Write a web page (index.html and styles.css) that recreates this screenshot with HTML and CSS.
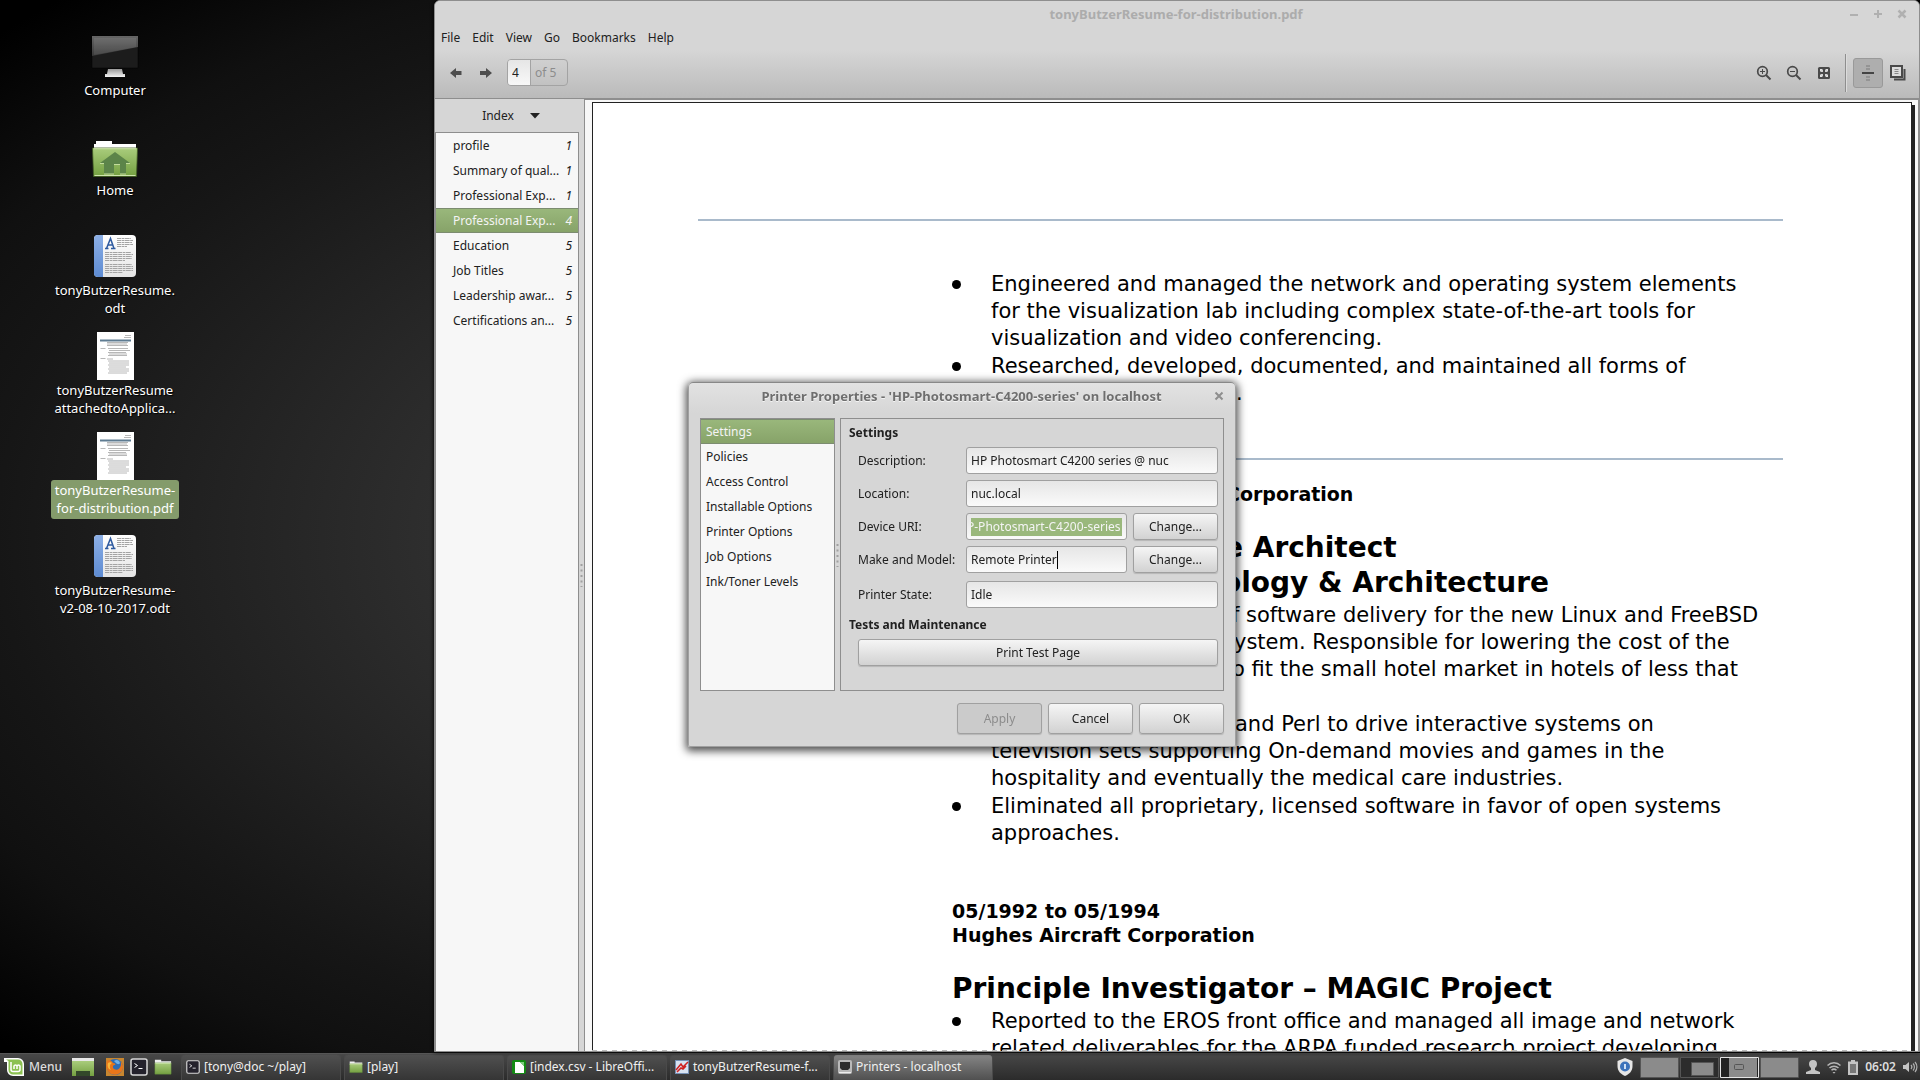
FILE: index.html
```html
<!DOCTYPE html>
<html lang="en">
<head>
<meta charset="utf-8">
<title>Desktop</title>
<link rel="stylesheet" href="styles.css">
</head>
<body>
<svg class="defs" aria-hidden="true">
  <defs>
    <linearGradient id="g-screen" x1="0" y1="0" x2="0" y2="1"><stop offset="0" stop-color="#666"/><stop offset="1" stop-color="#383838"/></linearGradient>
    <linearGradient id="g-folder" x1="0" y1="0" x2="0" y2="1"><stop offset="0" stop-color="#a9cc7c"/><stop offset="1" stop-color="#74a041"/></linearGradient>
    <linearGradient id="g-spine" x1="0" y1="0" x2="0" y2="1"><stop offset="0" stop-color="#8db0e6"/><stop offset="1" stop-color="#5d8bd2"/></linearGradient>
    <linearGradient id="g-paper" x1="0" y1="0" x2="0" y2="1"><stop offset="0" stop-color="#fff"/><stop offset="1" stop-color="#e4e4e4"/></linearGradient>
    <linearGradient id="g-stand" x1="0" y1="0" x2="0" y2="1"><stop offset="0" stop-color="#999"/><stop offset="1" stop-color="#f4f4f4"/></linearGradient>
  </defs>
  <symbol id="odt" viewBox="0 0 48 48">
    <rect x="3" y="3" width="42" height="42" rx="4" fill="url(#g-paper)"/>
    <path d="M7 3h5v42H7a4 4 0 0 1-4-4V7a4 4 0 0 1 4-4z" fill="url(#g-spine)"/>
    <path d="M14 16.500h3.500M20 16.500h4.500M15.500 16.500L19.500 6.500L23 16.500M16.500 13h5" fill="none" stroke="#2f5ba0" stroke-width="1.500"/>
    <path d="M26 6.500h14M26 8.500h16M26 10.500h15M26 12.500h16M26 14.500h10M14 20.500h26M14 22.500h28M14 24.500h27M14 26.500h27M14 28.500h20M14 32.500h27M14 34.500h28M14 36.500h28M14 38.500h28M14 40.500h18" stroke="#a4a4a4" stroke-width="1" stroke-dasharray="4 .6 2.500 .5 5 .6"/>
  </symbol>
  <symbol id="thumb" viewBox="0 0 37 48">
    <path d="M0 0h37v48H0z" fill="#fff"/>
    <path d="M3 7.500h31v2H3z" fill="#5f7c92"/>
    <path d="M28 3.500h6M27 5.500h7M10 10.500h21M10 12h20M10 13.500h21M3.500 16.500h5M11 16.500h20M12 18.500h21M11 20.500h18M12 22h18M11 23.500h19M3.500 26.500h5M10 27h6M11 29h21M12 31h20M11 33h21M12 35h17M11 37h21M12 39h20M11 41h19" stroke="#b8b8b8" stroke-width="1"/>
  </symbol>
  <symbol id="folder" viewBox="0 0 20 18">
    <path d="M1 1h7v1.500h11V6H1z" fill="#eee"/><path d="M1 4.500h18V17H1z" fill="url(#g-folder)" stroke="#5f8a3a" stroke-width=".5"/><path d="M1.500 5h17" stroke="#cbe3a9"/>
  </symbol>
  <symbol id="term" viewBox="0 0 18 18">
    <rect x="1" y="1" width="16" height="16" rx="2" fill="#24222c" stroke="#d8d8d8" stroke-width="1.500"/>
    <path d="M4.500 5.500l3 2-3 2M8.500 10.500h4" fill="none" stroke="#fff"/>
  </symbol>
</svg>

<main class="desktop">
  <nav class="icons">
    <a class="icon" href="#computer">
      <svg width="48" height="48" viewBox="0 0 48 48"><path d="M1 4h46v32H1z" fill="#1c1c1c" stroke="#000" stroke-width=".5"/><path d="M1 4h46v11L1 24z" fill="url(#g-screen)"/><path d="M3 6h42v9L3 23z" fill="#fff" opacity=".08"/><path d="M17 37h14l1 5h2v3H14v-3h2z" fill="url(#g-stand)"/></svg>
      <span class="name">Computer</span></a>
    <a class="icon" href="#home">
      <svg width="48" height="48" viewBox="0 0 48 48"><path d="M5 9h16v3h24v5H3v-5h2z" fill="#fff"/><path d="M1.500 16h45l-1 28.500h-43z" fill="url(#g-folder)" stroke="#3f5a22" stroke-width=".8"/><path d="M2.500 16.700h43M3.500 43.500h41" stroke="#cfe5ae"/><path d="M24 20l15 11h-4v11h-6v-9h-6v9H13V31H9z" fill="#5c8449"/><path d="M9 31.500h4M35 31.500h4M23 32.500h6M13 42h10M29 42h6" stroke="#c3dc9c"/></svg>
      <span class="name">Home</span></a>
    <a class="icon" href="#odt"><svg width="48" height="48"><use href="#odt"/></svg><span class="name">tonyButzerResume.<br>odt</span></a>
    <a class="icon" href="#app"><svg width="37" height="48"><use href="#thumb"/></svg><span class="name">tonyButzerResume<br>attachedtoApplica...</span></a>
    <a class="icon selected" href="#pdf"><svg width="37" height="48"><use href="#thumb"/></svg><span class="name">tonyButzerResume-<br>for-distribution.pdf</span></a>
    <a class="icon" href="#v2"><svg width="48" height="48"><use href="#odt"/></svg><span class="name">tonyButzerResume-<br>v2-08-10-2017.odt</span></a>
  </nav>

  <section class="viewer">
    <header class="chrome">
      <div class="titlebar">
        <h1>tonyButzerResume-for-distribution.pdf</h1>
        <div class="wm">
          <button aria-label="Minimize"><svg width="10" height="10"><path d="M1 6h8" stroke="#b0b0b0" stroke-width="2"/></svg></button>
          <button aria-label="Maximize"><svg width="10" height="10"><path d="M1 5h8M5 1v8" stroke="#b0b0b0" stroke-width="2"/></svg></button>
          <button aria-label="Close"><svg width="10" height="10"><path d="M1.500 1.500l7 7M8.500 1.500l-7 7" stroke="#b0b0b0" stroke-width="2.500"/></svg></button>
        </div>
      </div>
      <nav class="menubar"><a href="#file">File</a><a href="#edit">Edit</a><a href="#view">View</a><a href="#go">Go</a><a href="#bookmarks">Bookmarks</a><a href="#help">Help</a></nav>
      <div class="toolbar">
        <button class="tool" aria-label="Previous page"><svg width="14" height="12"><path d="M1 6l6-5v3h5.500v4H7v3z" fill="#4e4e4e"/></svg></button>
        <button class="tool" aria-label="Next page"><svg width="14" height="12"><path d="M13 6L7 1v3H1v4h6v3z" fill="#4e4e4e"/></svg></button>
        <label class="pager"><input value="4" aria-label="Page"><span>of 5</span></label>
        <span class="grow"></span>
        <button class="tool" aria-label="Zoom in"><svg width="16" height="16"><circle cx="6.500" cy="6.500" r="4.800" fill="none" stroke="#4a4a4a" stroke-width="1.700"/><path d="M4 6.500h5M6.500 4v5" stroke="#4a4a4a"/><path d="M10 10l4.500 4.500" stroke="#4a4a4a" stroke-width="2"/></svg></button>
        <button class="tool" aria-label="Zoom out"><svg width="16" height="16"><circle cx="6.500" cy="6.500" r="4.800" fill="none" stroke="#4a4a4a" stroke-width="1.700"/><path d="M4 6.500h5" stroke="#4a4a4a"/><path d="M10 10l4.500 4.500" stroke="#4a4a4a" stroke-width="2"/></svg></button>
        <button class="tool" aria-label="Fit page"><svg width="16" height="16"><rect x="2" y="2" width="12" height="12" rx="1.500" fill="#4a4a4a"/><path d="M4 4h3L4 7zM12 4v3L9 4zM12 12H9l3-3zM4 12V9l3 3z" fill="#e2e2e2"/><path d="M5 5h2v2H5zM9 5h2v2H9zM5 9h2v2H5zM9 9h2v2H9z" fill="#d2d2d2"/></svg></button>
        <span class="sep"></span>
        <button class="tool toggle" aria-label="Continuous"><svg width="16" height="16"><path d="M2 8h12" stroke="#444" stroke-width="2"/><path d="M6 1h4M6 4h4M6 12h4M6 15h4" stroke="#8c8c8c" stroke-width="1.500"/></svg></button>
        <button class="tool" aria-label="Dual page"><svg width="16" height="16"><path d="M14.500 4v10.500H4" fill="none" stroke="#4a4a4a" stroke-width="2"/><rect x="1" y="1" width="11" height="11" fill="#ddd" stroke="#4a4a4a" stroke-width="2"/><path d="M4.500 4.500h4M4.500 6.500h4M4.500 8.500h4" stroke="#888"/></svg></button>
      </div>
    </header>
    <div class="body">
      <aside class="sidebar">
        <button class="side-head">Index <svg width="10" height="6"><path d="M0 0h10L5 5.500z" fill="#222"/></svg></button>
        <ol class="outline">
          <li><a href="#p1">profile</a><i>1</i></li>
          <li><a href="#p1">Summary of qual...</a><i>1</i></li>
          <li><a href="#p1">Professional Exp...</a><i>1</i></li>
          <li class="current"><a href="#p4">Professional Exp...</a><i>4</i></li>
          <li><a href="#p5">Education</a><i>5</i></li>
          <li><a href="#p5">Job Titles</a><i>5</i></li>
          <li><a href="#p5">Leadership awar...</a><i>5</i></li>
          <li><a href="#p5">Certifications an...</a><i>5</i></li>
        </ol>
      </aside>
      <div class="grip"><svg width="3" height="24"><path d="M1.500 1v23" stroke="#a0a0a0" stroke-width="2" stroke-dasharray="2 3.500"/></svg></div>
      <div class="canvas">
        <article class="page">
          <hr>
          <div class="text">
            <ul>
              <li><span>Engineered and managed the network and operating system elements<br>for the visualization lab including complex state-of-the-art tools for<br>visualization and video conferencing.</span></li>
              <li><span>Researched, developed, documented, and maintained all forms of<br><b class="lead lead-dot"></b>.</span></li>
            </ul>
          </div>
          <hr class="thin">
          <div class="text">
            <h3><b class="lead lead-employer"></b>Corporation</h3>
            <h2><b class="lead lead-role"></b>e Architect<br><b class="lead lead-unit"></b>ology &amp; Architecture</h2>
            <ul>
              <li class="plain"><span><b class="lead lead-a"></b>f software delivery for the new Linux and FreeBSD<br><b class="lead lead-b"></b>ystem. Responsible for lowering the cost of the<br><b class="lead lead-c"></b>o fit the small hotel market in hotels of less that<br><br></span></li>
              <li class="plain"><span><b class="lead lead-d"></b>and Perl to drive interactive systems on<br>television sets supporting On-demand movies and games in the<br>hospitality and eventually the medical care industries.</span></li>
              <li><span>Eliminated all proprietary, licensed software in favor of open systems<br>approaches.</span></li>
            </ul>
            <h3 class="next">05/1992 to 05/1994<br>Hughes Aircraft Corporation</h3>
            <h2>Principle Investigator – MAGIC Project</h2>
            <ul>
              <li><span>Reported to the EROS front office and managed all image and network<br>related deliverables for the ARPA funded research project developing</span></li>
            </ul>
          </div>
        </article>
      </div>
    </div>
  </section>

  <section class="dialog" role="dialog" aria-labelledby="dlg-title">
    <header class="dlg-title">
      <h2 id="dlg-title">Printer Properties - 'HP-Photosmart-C4200-series' on localhost</h2>
      <button aria-label="Close"><svg width="10" height="10"><path d="M1.500 1.500l7 7M8.500 1.500l-7 7" stroke="#8e8e8e" stroke-width="2"/></svg></button>
    </header>
    <div class="dlg-main">
      <ul class="tabs">
        <li class="current"><a href="#settings">Settings</a></li>
        <li><a href="#policies">Policies</a></li>
        <li><a href="#access">Access Control</a></li>
        <li><a href="#installable">Installable Options</a></li>
        <li><a href="#printer">Printer Options</a></li>
        <li><a href="#job">Job Options</a></li>
        <li><a href="#ink">Ink/Toner Levels</a></li>
      </ul>
      <div class="dlg-grip"><svg width="3" height="24"><path d="M1.500 1v23" stroke="#a0a0a0" stroke-width="2" stroke-dasharray="2 3.500"/></svg></div>
      <form class="panel">
        <h3>Settings</h3>
        <div class="rows">
          <div class="row"><label for="desc">Description:</label><input class="box" id="desc" value="HP Photosmart C4200 series @ nuc"></div>
          <div class="row"><label for="loc">Location:</label><input class="box" id="loc" value="nuc.local"></div>
          <div class="row"><label for="uri">Device URI:</label><div class="box"><input class="marked" id="uri" value="P-Photosmart-C4200-series"></div><button type="button" class="btn">Change...</button></div>
          <div class="row"><label for="make">Make and Model:</label><div class="box"><input class="sized" id="make" size="11" value="Remote Printer"><span class="caret"></span></div><button type="button" class="btn">Change...</button></div>
          <div class="row state"><label for="state">Printer State:</label><input class="box" id="state" value="Idle" readonly></div>
        </div>
        <h3 class="tests">Tests and Maintenance</h3>
        <button type="button" class="btn wide">Print Test Page</button>
      </form>
    </div>
    <footer class="dlg-foot">
      <button class="btn" disabled>Apply</button><button class="btn">Cancel</button><button class="btn">OK</button>
    </footer>
  </section>
</main>

<footer class="taskbar">
  <button class="menu"><svg width="20" height="20" viewBox="0 0 20 20"><path d="M0 1h14a6 6 0 0 1 6 6v12H9a6 6 0 0 1-6-6V5H0z" fill="#fff"/><path d="M2 2.500h12a4.500 4.500 0 0 1 4.500 4.500v10.500H9A4.500 4.500 0 0 1 4.500 13V4z" fill="#8cc152"/><path d="M7 5v7.500a2 2 0 0 0 2 2h5a2 2 0 0 0 2-2V9a1.600 1.600 0 0 0-3 0v3M13 9a1.600 1.600 0 0 0-3 0v3" fill="none" stroke="#fff" stroke-width="1.500"/></svg>Menu</button>
  <div class="launch">
    <button class="show" aria-label="Show desktop"><svg width="22" height="18"><path d="M0 0h22v3H0z" fill="#e8e8e8"/><path d="M0 3h22v15H0z" fill="url(#g-folder)"/><path d="M4 13h14v5H4z" fill="#33482a"/></svg></button>
    <button aria-label="Firefox"><svg width="18" height="18"><path d="M0 0h18v18H0z" fill="#c8862f"/><circle cx="9" cy="9" r="8" fill="#2e6db4"/><path d="M1 3c3-2 5 0 6 2 2 0 3 1 2 2-2 0-3 2-1 4 3 2 6 0 7-4 0-2 0-3-1-4 4 3 4 9 0 12-4 3-10 2-12-2C0 10 0 6 1 3z" fill="#e8751a"/><path d="M2 5c1-1 3-1 4 0-2 1-3 4-1 7-3-1-4-4-3-7z" fill="#f7b63c"/><path d="M8 3c3-2 5-1 6 2-1 2-3 1-4 0z" fill="#6fb1e8"/></svg></button>
    <button aria-label="Terminal"><svg width="18" height="18"><use href="#term"/></svg></button>
    <button aria-label="Files"><svg width="18" height="18"><use href="#folder"/></svg></button>
  </div>
  <div class="tasks">
    <button class="task"><svg width="14" height="14"><use href="#term"/></svg>[tony@doc ~/play]</button>
    <button class="task"><svg width="14" height="14"><use href="#folder"/></svg>[play]</button>
    <button class="task"><svg width="14" height="14"><rect width="14" height="14" rx="2" fill="#138a13"/><path d="M3 2h5l4 4v7H3z" fill="#fff"/><path d="M8 2h4v4z" fill="#7fd07f"/></svg>[index.csv - LibreOffi...</button>
    <button class="task"><svg width="14" height="14"><path d="M0 0h14v14H0z" fill="#7590b5"/><path d="M1 1h12v12H1z" fill="#d7e2f1"/><path d="M1 10l5-6 2 3 5-5M2 12l4-4 2 1 3-3" fill="none" stroke="#d02020" stroke-width="1.500"/></svg>tonyButzerResume-f...</button>
    <button class="task active"><svg width="14" height="14"><rect width="14" height="14" rx="2" fill="#b9b9b9"/><path d="M2 2h10v6l-2 2H4L2 8z" fill="#2d2d2d"/><path d="M1 12.500h12" stroke="#eee"/></svg>Printers - localhost</button>
  </div>
  <div class="tray">
    <svg width="16" height="18"><path d="M8 0l7.500 3v5c0 5-3 8-7.500 10C3.500 16 .5 13 .5 8V3z" fill="#e6e6e6"/><circle cx="8" cy="8.500" r="5" fill="#3d73bb"/><path d="M8 6v5" stroke="#cfe0f5" stroke-width="2"/></svg>
    <div class="spaces">
      <svg class="ws" width="39" height="21"><path d="M1 1h37v19H1z" fill="#8b8b8b"/><path d="M.5.500h38v20H.5z" fill="none" stroke="#555"/></svg>
      <svg class="ws" width="39" height="21"><path d="M1 1h37v19H1z" fill="#2c2c2c"/><path d="M11.500 5.500h22v13h-22z" fill="#8b8b8b" stroke="#555"/><path d="M.5.500h38v20H.5z" fill="none" stroke="#555"/></svg>
      <svg class="ws" width="39" height="21"><path d="M1 1h37v19H1z" fill="#222"/><path d="M9 1h28v19H9z" fill="#8b8b8b"/><rect x="14.500" y="7.500" width="9" height="5" rx="1" fill="none" stroke="#555"/><path d="M.5.500h38v20H.5z" fill="none" stroke="#e4e4e4"/></svg>
      <svg class="ws" width="39" height="21"><path d="M1 1h37v19H1z" fill="#8b8b8b"/><path d="M.5.500h38v20H.5z" fill="none" stroke="#555"/></svg>
    </div>
    <svg width="14" height="14"><path d="M7 0c2.500 0 4 1.500 4 4 0 2-1 3-2 4v2l5 2v2H0v-2l5-2V8C4 7 3 6 3 4c0-2.500 1.500-4 4-4z" fill="#c4c4c4"/></svg>
    <svg width="14" height="14" viewBox="1 0 14 14"><path d="M1.500 5.500a9 9 0 0 1 13 0M3.500 8a6.500 6.500 0 0 1 9 0M5.500 10.300a3.700 3.700 0 0 1 5 0" fill="none" stroke="#b5b5b5" stroke-width="1.500"/><path d="M6.500 12h3L8 13.800z" fill="#b5b5b5"/></svg>
    <svg width="10" height="15"><path d="M3 0h4v1.500h3V15H0V1.500h3z" fill="#c4c4c4"/><path d="M2 4h6v9H2z" fill="#777"/></svg>
    <time>06:02</time>
    <svg width="16" height="12"><path d="M0 4h2.500L6 1v10L2.500 8H0z" fill="#c4c4c4"/><path d="M8 4a3 3 0 0 1 0 4M10 2.500a5 5 0 0 1 0 7M12 1a7.500 7.500 0 0 1 0 10" fill="none" stroke="#b0b0b0" stroke-width="1.200"/></svg>
  </div>
</footer>
</body>
</html>
```
FILE: styles.css
```css
* { box-sizing: border-box; }
body {
  margin: 0;
  height: 100vh;
  display: flex;
  flex-direction: column;
  overflow: hidden;
  background: #000;
  font: 12px/18px "Noto Sans", sans-serif;
  color: #212121;
}
.defs { position: absolute; width: 0; height: 0; }
svg { display: block; flex: none; }
h1, h2, h3, ul, ol { margin: 0; padding: 0; font-size: inherit; list-style: none; }
a { color: inherit; text-decoration: none; }
button, input { font: inherit; color: inherit; margin: 0; padding: 0; border: 0; background: none; }
button { display: flex; align-items: center; justify-content: center; }
input { outline: 0; min-width: 0; }

.desktop {
  flex: 1;
  min-height: 0;
  position: relative;
  background: radial-gradient(ellipse farthest-corner at 50% 51%, #363636 0, #2e2e2e 39%, #161616 71%, #101010 81%, #000 97%);
}

/* desktop icons */
.icons { width: 230px; padding-top: 32px; }
.icon { display: flex; flex-direction: column; align-items: center; height: 100px; color: #fff; font-size: 13px; text-align: center; white-space: nowrap; }
.name { padding: 1px 4px 2px; border-radius: 3px; text-shadow: 1px 1px 1px #000; }
.selected .name { background: #849b6b; text-shadow: none; }

/* document viewer window */
.viewer {
  position: absolute;
  inset: 0 0 1px 434px;
  display: flex;
  flex-direction: column;
  border: 1px solid #8e8e8e;
  border-radius: 6px 6px 0 0;
  background: #d6d6d6;
  overflow: hidden;
  box-shadow: 0 0 4px #000;
}
.chrome { background: linear-gradient(#d6d6d6 50%, #bababa); border-bottom: 1px solid #8e8e8e; }
.titlebar { display: flex; align-items: center; height: 26px; padding-right: 12px; }
.titlebar h1 { flex: 1; text-align: center; color: #acacac; padding-left: 68px; font-size: 13px; }
.wm { display: flex; gap: 14px; }
.menubar { display: flex; gap: 12px; padding: 2px 6px; height: 22px; }
.toolbar { display: flex; align-items: center; height: 49px; padding: 0 6px 2px; }
.tool { width: 30px; height: 30px; border-radius: 3px; }
.pager { display: flex; width: 61px; height: 27px; margin-left: 6px; border: 1px solid #a3a3a3; border-radius: 4px; overflow: hidden; line-height: 25px; color: #8c8c8c; }
.pager input { width: 23px; padding-left: 4px; background: linear-gradient(#e6e6e6, #f8f8f8); border-right: 1px solid #a3a3a3; color: #212121; }
.pager span { padding-left: 4px; }
.grow { flex: 1; }
.sep { width: 1px; height: 38px; margin: 0 7px 0 6px; background: #8e8e8e; box-shadow: 1px 0 #dcdcdc; }
.toggle { background: #aeaeae; border: 1px solid #999; }
.body { flex: 1; min-height: 0; display: flex; }
.sidebar { width: 144px; display: flex; flex-direction: column; }
.side-head { height: 33px; gap: 16px; padding-left: 8px; }
.outline { flex: 1; background: #f7f7f7; border: 1px solid #8e8e8e; border-width: 1px 1px 0 1px; }
.outline li { display: flex; justify-content: space-between; height: 25px; line-height: 25px; padding: 0 6px 0 17px; white-space: nowrap; }
.outline .current, .tabs .current { background: linear-gradient(#9ab87c, #86a268); color: #f4f4f4; box-shadow: inset 0 1px #7c8c70, inset 0 -1px #7c8c70; }
.grip { width: 5px; display: flex; align-items: center; justify-content: center; }
.canvas { flex: 1; min-width: 0; padding: 2px 6px 0 7px; background: #f7f7f7; border: 1px solid #8e8e8e; border-width: 1px 1px 0 1px; overflow: hidden; }
/* dashed hint that the document continues past the edge */
.canvas::after { content: ""; display: block; position: sticky; bottom: 0; height: 1px; margin-top: -1px; background: repeating-linear-gradient(90deg, #bbb 0 5px, transparent 5px 10px); }

/* resume page */
.page {
  min-height: 100%;
  padding: 116px 128px 0 105px;
  background: #fff;
  border: 1px solid #222;
  border-width: 1px 1px 0 1px;
  box-shadow: 3px 3px #222;
  color: #000;
  font: 21px/27px "DejaVu Sans", sans-serif;
  white-space: nowrap;
}
.page hr { margin: 0; border: 0; height: 2px; background: #a9bacb; }
.page hr.thin { margin-top: 51px; }
.text { padding-left: 254px; }
.text ul { padding-top: 50px; }
.text li { display: grid; grid-template-columns: 39px 1fr; }
.text li + li { margin-top: 1px; }
.text li::before { content: ""; width: 9px; height: 9px; margin-top: 9px; border-radius: 50%; background: #000; }
.text li.plain::before { background: none; }
.text h3 { font-size: 19px; line-height: 24px; padding-top: 22px; }
.text h2 { font-size: 28px; line-height: 35px; padding-top: 24px; }
.text h2 + ul { padding-top: 2px; }
.text h3.next { padding-top: 52px; }
.lead { display: inline-block; }
.lead-dot { width: 245px; }
.lead-employer { width: 274px; }
.lead-role { width: 272px; }
.lead-unit { width: 270px; }
.lead-a { width: 241px; }
.lead-b { width: 243px; }
.lead-c { width: 241px; }
.lead-d { width: 244px; }

/* printer properties dialog */
.dialog {
  position: absolute;
  left: 688px;
  top: 382px;
  width: 548px;
  padding: 0 11px 12px;
  background: linear-gradient(#e2e2e2, #d6d6d6 30px);
  border: 1px solid #a0a0a0;
  border-top-color: #888;
  border-radius: 5px 5px 2px 2px;
  box-shadow: 0 2px 8px 2px rgba(0, 0, 0, .7);
}
.dlg-title { display: flex; align-items: center; height: 35px; padding-bottom: 9px; }
.dlg-title h2 { flex: 1; text-align: center; color: #6e6e6e; text-shadow: 0 1px #f4f4f4; font-size: 13px; padding-left: 9px; }
.dlg-main { display: flex; height: 273px; }
.tabs { width: 135px; background: #f7f7f7; border: 1px solid #8e8e8e; }
.tabs li { height: 25px; line-height: 25px; padding-left: 5px; }
.dlg-grip { width: 5px; display: flex; align-items: center; justify-content: center; }
.panel { flex: 1; min-width: 0; border: 1px solid #8e8e8e; padding: 4px 5px 0 8px; }
.panel h3 { line-height: 20px; }
.rows { display: flex; flex-direction: column; gap: 6px; padding: 4px 0 0 9px; }
.row { display: grid; grid-template-columns: 108px minmax(0, 1fr) auto; align-items: center; height: 27px; }
.row.state { margin-top: 2px; }
.row .btn { width: 85px; margin-left: 6px; }
.box { display: flex; align-items: center; width: 100%; height: 27px; padding: 0 4px; border: 1px solid #a0a0a0; border-radius: 3px; background: linear-gradient(#e6e6e6, #fafafa); }
.marked { width: 100%; height: 18px; background: #9ab87c; color: #f4f4f4; text-indent: -4px; }
.sized { field-sizing: content; }
.caret { width: 1px; height: 18px; background: #000; }
.btn { height: 27px; border: 1px solid #a0a0a0; border-radius: 3px; background: linear-gradient(#f5f5f5, #d2d2d2); box-shadow: 0 1px 1px rgba(0, 0, 0, .15); }
.btn:disabled { background: #cbcbcb; color: #8c8c8c; }
.tests { padding-top: 7px; }
.wide { width: calc(100% - 9px); margin: 4px 0 0 9px; }
.dlg-foot { display: flex; justify-content: flex-end; gap: 6px; padding-top: 12px; }
.dlg-foot .btn { width: 85px; height: 31px; }

/* panel at the bottom of the screen */
.taskbar { display: flex; align-items: center; height: 27px; padding: 0 1px 0 4px; background: linear-gradient(#484848, #2b2b2b); border-top: 1px solid #555; color: #f0f0f0; }
.menu { gap: 5px; font-weight: 500; color: #ddd; }
.launch { display: flex; gap: 6px; padding: 0 9px 0 10px; }
.show { margin-right: 6px; }
.tasks { flex: 1; display: flex; gap: 3px; min-width: 0; }
.task { width: 160px; height: 26px; justify-content: flex-start; gap: 4px; padding: 0 0 2px 4px; border: 1px solid #4a4a4a; border-bottom: 0; border-radius: 4px 4px 0 0; background: linear-gradient(#505050, #353535); white-space: nowrap; }
.task.active { background: linear-gradient(#858585, #505050); }
.tray { display: flex; align-items: center; gap: 7px; }
.spaces { display: flex; gap: 1px; }
.tray time { font-weight: 600; color: #ddd; }
```
